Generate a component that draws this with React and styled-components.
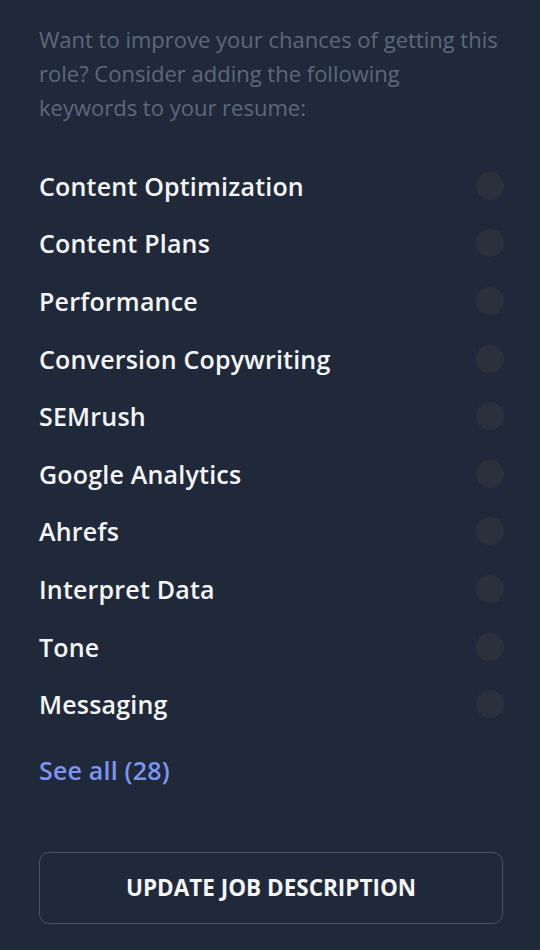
import React from 'react'
import styled, { createGlobalStyle } from 'styled-components'

const GlobalStyle = createGlobalStyle`
    html, body {
        margin: 0;
        padding: 0;
        background: #202939;
    }
    body {
        font-family: "Open Sans", "Liberation Sans", sans-serif;
        -webkit-font-smoothing: antialiased;
    }
`

const Panel = styled.div`
    display: flex;
    flex-direction: column;
    width: 540px;
    min-height: 950px;
    box-sizing: border-box;
    padding: 22px 37px 0 39px;
    background: #202939;
`

const Intro = styled.p`
    margin: 0;
    font-size: 22px;
    line-height: 34px;
    color: #5d687a;
`

const KeywordList = styled.ul`
    list-style: none;
    margin: 33px 0 0;
    padding: 0;
    display: flex;
    flex-direction: column;
`

const KeywordRow = styled.li`
    display: flex;
    align-items: center;
    justify-content: space-between;
    height: 57.6px;
`

const KeywordName = styled.span`
    font-size: 25px;
    font-weight: 600;
    letter-spacing: 0.2px;
    color: #f4f5f7;
`

const Dot = styled.span`
    flex-shrink: 0;
    width: 28px;
    height: 28px;
    border-radius: 50%;
    background: #2a313c;
    margin-right: -1px;
`

const SeeAll = styled.a`
    margin-top: 20px;
    font-size: 25px;
    font-weight: 600;
    letter-spacing: 0.2px;
    color: #7d95f2;
    text-decoration: none;
    cursor: pointer;
`

const UpdateButton = styled.button`
    margin-top: 65px;
    height: 72px;
    width: 100%;
    border: 1px solid #4a5263;
    border-radius: 10px;
    background: transparent;
    color: #f4f5f7;
    font-family: inherit;
    font-size: 22.5px;
    font-weight: 700;
    cursor: pointer;
`

const keywords = [
    'Content Optimization',
    'Content Plans',
    'Performance',
    'Conversion Copywriting',
    'SEMrush',
    'Google Analytics',
    'Ahrefs',
    'Interpret Data',
    'Tone',
    'Messaging',
]

export default function App() {
    return (
        <>
            <GlobalStyle />
            <Panel>
                <Intro>
                    Want to improve your chances of getting this role? Consider adding the following keywords to your resume:
                </Intro>
                <KeywordList>
                    {keywords.map(k => (
                        <KeywordRow key={k}>
                            <KeywordName>{k}</KeywordName>
                            <Dot />
                        </KeywordRow>
                    ))}
                </KeywordList>
                <SeeAll>See all (28)</SeeAll>
                <UpdateButton>UPDATE JOB DESCRIPTION</UpdateButton>
            </Panel>
        </>
    )
}
